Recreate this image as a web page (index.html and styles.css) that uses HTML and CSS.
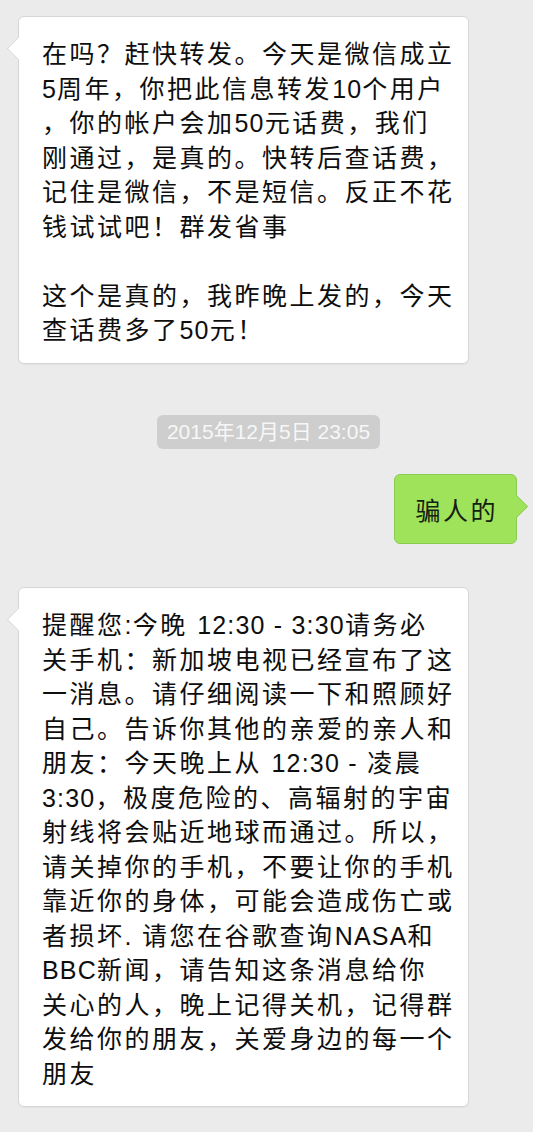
FILE: index.html
```html
<!DOCTYPE html>
<html lang="zh-CN">
<head>
<meta charset="utf-8">
<title>微信聊天</title>
<link rel="stylesheet" href="styles.css">
</head>
<body>
<div class="chat">
  <div class="row row-left">
    <div class="bubble bubble-white">在吗？赶快转发。今天是微信成立<br><span class="en">5</span>周年，你把此信息转发<span class="en">10</span>个用户<br>，你的帐户会加<span class="en">50</span>元话费，我们<br>刚通过，是真的。快转后查话费，<br>记住是微信，不是短信。反正不花<br>钱试试吧！群发省事<br><br>这个是真的，我昨晚上发的，今天<br>查话费多了<span class="en">50</span>元！</div>
  </div>

  <div class="time"><span class="time-label">2015年12月5日 23:05</span></div>

  <div class="row row-right">
    <div class="bubble bubble-green">骗人的</div>
  </div>

  <div class="row row-left row-gap">
    <div class="bubble bubble-white">提醒您<span class="en">:</span>今晚 <span class="en">12:30 - 3:30</span>请务必<br>关手机：新加坡电视已经宣布了这<br>一消息。请仔细阅读一下和照顾好<br>自己。告诉你其他的亲爱的亲人和<br>朋友：今天晚上从 <span class="en">12:30 -</span> 凌晨<br><span class="en">3:30</span>，极度危险的、高辐射的宇宙<br>射线将会贴近地球而通过。所以，<br>请关掉你的手机，不要让你的手机<br>靠近你的身体，可能会造成伤亡或<br>者损坏<span class="en">.</span> 请您在谷歌查询<span class="en">NASA</span>和<br><span class="en">BBC</span>新闻，请告知这条消息给你<br>关心的人，晚上记得关机，记得群<br>发给你的朋友，关爱身边的每一个<br>朋友</div>
  </div>
</div>
</body>
</html>
```

FILE: styles.css
```css
html, body {
  margin: 0;
  padding: 0;
}

body {
  background: #ebebeb;
  font-family: "Liberation Sans", "Noto Sans CJK SC", sans-serif;
  color: #0e0e0e;
  width: 533px;
  min-height: 1132px;
  overflow: hidden;
}

.chat {
  display: flex;
  flex-direction: column;
  padding-top: 16px;
}

.row {
  display: flex;
}

.row-left {
  justify-content: flex-start;
  padding-left: 18px;
}

.row-right {
  justify-content: flex-end;
  padding-right: 16px;
  margin-top: 25px;
}

.row-gap {
  margin-top: 43px;
}

.bubble {
  position: relative;
  font-size: 25px;
  letter-spacing: 2.5px;
  line-height: 34.5px;
  border-radius: 6px;
  white-space: nowrap;
}

.bubble .en {
  letter-spacing: 1.2px;
}

.bubble-white {
  width: 451px;
  box-sizing: border-box;
  background: #ffffff;
  border: 1px solid #d6d6d6;
  box-shadow: 0 1px 1px rgba(0, 0, 0, 0.04);
  padding: 20px 10px 15px 23px;
}

.bubble-white::before {
  content: "";
  position: absolute;
  left: -9px;
  top: 23px;
  width: 16px;
  height: 16px;
  background: #ffffff;
  border-left: 1px solid #d6d6d6;
  border-bottom: 1px solid #d6d6d6;
  transform: rotate(45deg);
  border-bottom-left-radius: 2px;
}

.bubble-green {
  background: #9fe35b;
  border: 1px solid #8ccb52;
  padding: 19px 18px 15px 20px;
  color: #142010;
}

.bubble-green::after {
  content: "";
  position: absolute;
  right: -9px;
  top: 23px;
  width: 16px;
  height: 16px;
  background: #9fe35b;
  border-right: 1px solid #8ccb52;
  border-top: 1px solid #8ccb52;
  transform: rotate(45deg);
  border-top-right-radius: 2px;
}

.time {
  display: flex;
  justify-content: center;
  margin-top: 51px;
  padding-left: 4px;
}

.time-label {
  background: #cecece;
  color: #f7f7f7;
  font-size: 21px;
  line-height: 34px;
  padding: 0 10px;
  border-radius: 6px;
}
```
